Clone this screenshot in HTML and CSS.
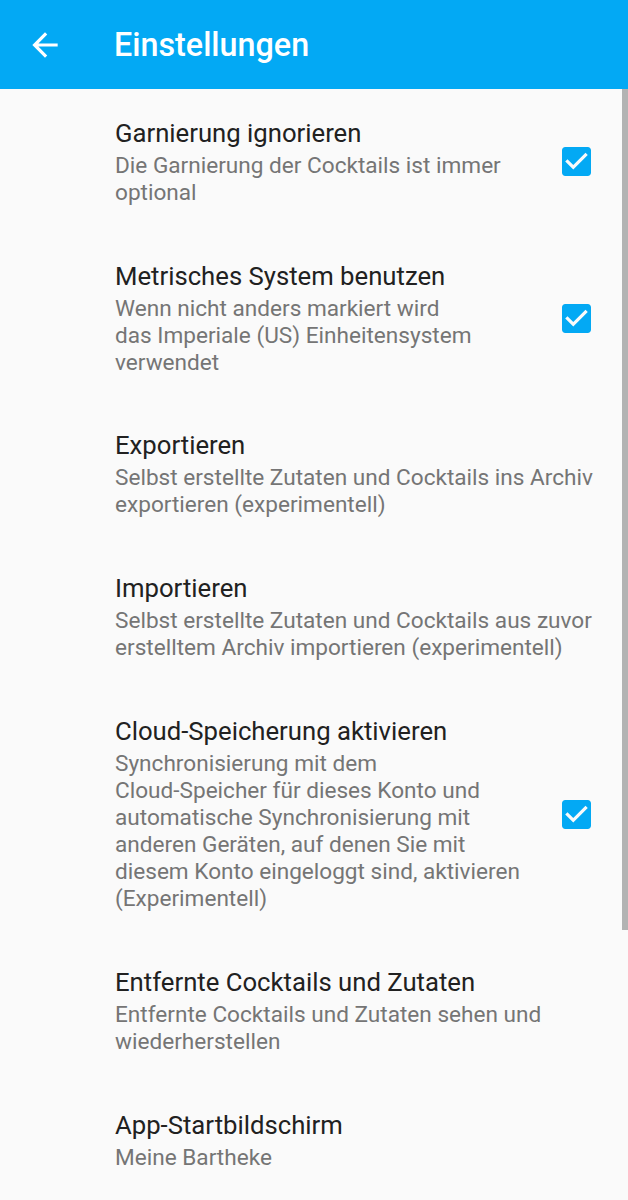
FILE: index.html
```html
<!DOCTYPE html>
<html lang="de">
<head>
    <meta charset="UTF-8">
    <meta name="viewport" content="width=device-width, initial-scale=1.0">
    <title>Einstellungen</title>
    <link rel="stylesheet" href="styles.css">
</head>
<body>
    <header class="toolbar">
        <svg class="back" viewBox="0 0 24 24" width="38" height="38">
            <path d="M20 11H7.83l5.59-5.59L12 4l-8 8 8 8 1.41-1.41L7.83 13H20v-2z" fill="#fff"/>
        </svg>
        <h1>Einstellungen</h1>
    </header>

    <div class="prefs">
        <div class="pref">
            <div class="text">
                <div class="title">Garnierung ignorieren</div>
                <div class="summary">Die Garnierung der Cocktails ist immer<br>optional</div>
            </div>
            <svg class="check" viewBox="3 3 18 18" width="29" height="29">
                <path d="M19 3H5c-1.11 0-2 .9-2 2v14c0 1.1.89 2 2 2h14c1.11 0 2-.9 2-2V5c0-1.1-.89-2-2-2zm-9 14l-5-5 1.41-1.41L10 14.17l7.59-7.59L19 8l-9 9z"/>
            </svg>
        </div>

        <div class="pref">
            <div class="text">
                <div class="title">Metrisches System benutzen</div>
                <div class="summary">Wenn nicht anders markiert wird<br>das Imperiale (US) Einheitensystem<br>verwendet</div>
            </div>
            <svg class="check" viewBox="3 3 18 18" width="29" height="29">
                <path d="M19 3H5c-1.11 0-2 .9-2 2v14c0 1.1.89 2 2 2h14c1.11 0 2-.9 2-2V5c0-1.1-.89-2-2-2zm-9 14l-5-5 1.41-1.41L10 14.17l7.59-7.59L19 8l-9 9z"/>
            </svg>
        </div>

        <div class="pref">
            <div class="text">
                <div class="title">Exportieren</div>
                <div class="summary">Selbst erstellte Zutaten und Cocktails ins Archiv<br>exportieren (experimentell)</div>
            </div>
        </div>

        <div class="pref">
            <div class="text">
                <div class="title">Importieren</div>
                <div class="summary">Selbst erstellte Zutaten und Cocktails aus zuvor<br>erstelltem Archiv importieren (experimentell)</div>
            </div>
        </div>

        <div class="pref">
            <div class="text">
                <div class="title">Cloud-Speicherung aktivieren</div>
                <div class="summary">Synchronisierung mit dem<br>Cloud-Speicher für dieses Konto und<br>automatische Synchronisierung mit<br>anderen Geräten, auf denen Sie mit<br>diesem Konto eingeloggt sind, aktivieren<br>(Experimentell)</div>
            </div>
            <svg class="check" viewBox="3 3 18 18" width="29" height="29">
                <path d="M19 3H5c-1.11 0-2 .9-2 2v14c0 1.1.89 2 2 2h14c1.11 0 2-.9 2-2V5c0-1.1-.89-2-2-2zm-9 14l-5-5 1.41-1.41L10 14.17l7.59-7.59L19 8l-9 9z"/>
            </svg>
        </div>

        <div class="pref">
            <div class="text">
                <div class="title">Entfernte Cocktails und Zutaten</div>
                <div class="summary">Entfernte Cocktails und Zutaten sehen und<br>wiederherstellen</div>
            </div>
        </div>

        <div class="pref">
            <div class="text">
                <div class="title">App-Startbildschirm</div>
                <div class="summary">Meine Bartheke</div>
            </div>
        </div>
    </div>

    <div class="scrollbar"></div>
</body>
</html>
```

FILE: styles.css
```css
body {
    margin: 0;
    background-color: #fafafa;
    font-family: Roboto, "Noto Sans", sans-serif;
    overflow: hidden;
}
.toolbar {
    display: flex;
    align-items: center;
    height: 89px;
    background-color: #03a9f4;
}
.back {
    margin-left: 26px;
    flex-shrink: 0;
}
.toolbar h1 {
    margin: 0 0 0 50px;
    font-size: 32.3px;
    font-weight: 500;
    color: #fff;
}
.prefs {
    padding-top: 1.5px;
}
.pref {
    display: flex;
    align-items: center;
    padding: 27.4px 20px 27.4px 115px;
}
.text {
    flex: 1;
}
.title {
    font-size: 25.7px;
    line-height: 30px;
    color: #212121;
}
.summary {
    margin-top: 4px;
    font-size: 22.6px;
    line-height: 27px;
    color: #757575;
}
.check {
    flex-shrink: 0;
    margin-right: 17px;
    fill: #03a9f4;
}
.scrollbar {
    position: absolute;
    top: 89px;
    right: 0;
    width: 6px;
    height: 841px;
    background-color: #b3b3b3;
}
```
